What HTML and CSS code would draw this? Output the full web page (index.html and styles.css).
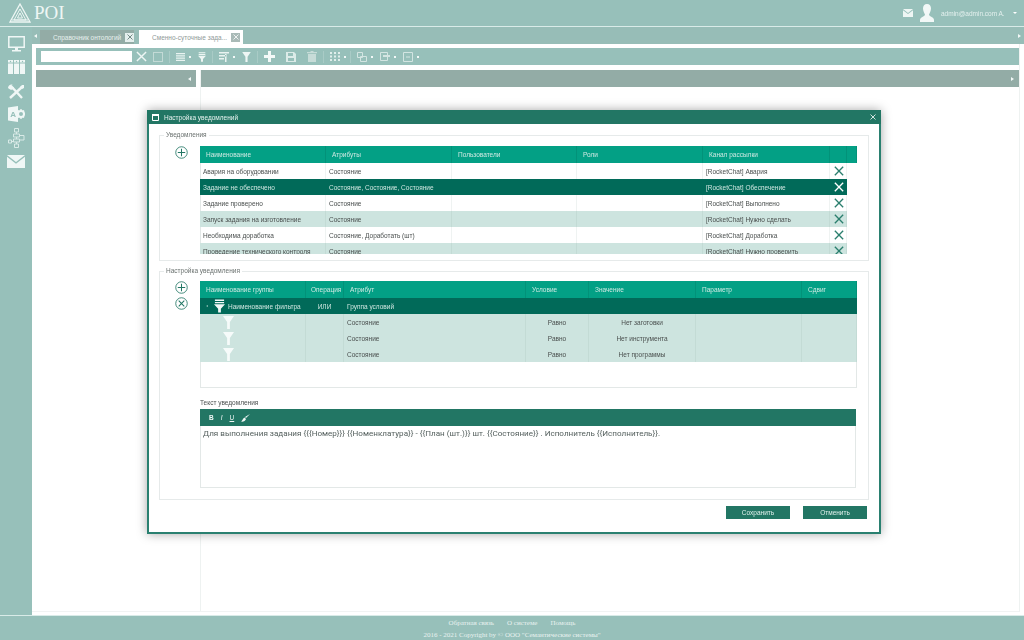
FILE: index.html
```html
<!DOCTYPE html>
<html lang="en">
<head>
<meta charset="UTF-8">
<title>POI</title>
<link rel="stylesheet" href="styles.css">
</head>
<body>
<svg class="defs" width="0" height="0">
  <symbol id="x" viewBox="0 0 12 12"><path d="M1 1l10 10M11 1L1 11" fill="none" stroke="currentColor" stroke-width="1.6"/></symbol>
  <symbol id="funnel" viewBox="0 0 12 14"><path d="M0 0h12L7.500 6.500V14h-3V6.500z" fill="currentColor"/></symbol>
  <symbol id="funnel-head" viewBox="0 0 12 14"><path d="M1 0h10v1.500H1zM1 2.500h10V4H1zM0 5h12L7.500 10v4h-3v-4z" fill="currentColor"/></symbol>
  <symbol id="plus-round" viewBox="0 0 14 14"><circle cx="7" cy="7" r="6.200" fill="none" stroke="currentColor" stroke-width=".9"/><path d="M7 3v8M3 7h8" stroke="currentColor" stroke-width="1.100"/></symbol>
  <symbol id="x-round" viewBox="0 0 14 14"><circle cx="7" cy="7" r="6.200" fill="none" stroke="currentColor" stroke-width=".9"/><path d="M4 4l6 6M10 4l-6 6" stroke="currentColor" stroke-width="1.100"/></symbol>
</svg>

<header class="topbar">
  <div class="logo">
    <svg width="22" height="20" viewBox="0 0 22 20"><path d="M11 1l10 18H1z" fill="none" stroke="#eef6f4" stroke-width="1.300"/><path d="M11 6l6 11H5z" fill="none" stroke="#eef6f4"/><path d="M11 10l2.500 5h-5zM3 17h16" fill="none" stroke="#eef6f4"/></svg>
    <span class="logo-name">POI</span>
  </div>
  <div class="user">
    <svg width="10" height="8" viewBox="0 0 10 8"><path d="M0 0h10L5 4z M0 1.200V8h10V1.200L5 5z" fill="#eef6f4"/></svg>
    <svg width="14" height="18" viewBox="0 0 14 18"><path d="M7 0c2.600 0 4 2 4 4.500S9.500 9.500 9 10.500c0 1 1.500 2 3 2.700 1.300.6 2 1.500 2 2.800v2H0v-2c0-1.300.7-2.200 2-2.800 1.500-.7 3-1.700 3-2.700-.5-1-2-3.500-2-6S4.400 0 7 0z" fill="#f2f8f7"/></svg>
    <span class="user-name">admin@admin.com A.</span>
    <span class="caret"></span>
  </div>
</header>

<div class="middle">
  <nav class="sidebar">
    <svg width="17" height="16" viewBox="0 0 17 16"><path d="M.8.800h15.400v10.400H.8z" fill="none" stroke="#f0f7f6" stroke-width="1.500"/><path d="M7 11.500h3V14H7zM4 14h9v1.500H4z" fill="#f0f7f6"/></svg>
    <svg class="nav-binders" width="17" height="14" viewBox="0 0 17 14"><path d="M0 0h5v14H0zM6 0h5v14H6zM12 0h5v14h-5z" fill="#f0f7f6"/><path d="M0 3h17" stroke="#97c0ba"/><circle cx="2.500" cy="1.500" r=".7" fill="#97c0ba"/><circle cx="8.500" cy="1.500" r=".7" fill="#97c0ba"/><circle cx="14.500" cy="1.500" r=".7" fill="#97c0ba"/></svg>
    <svg class="nav-tools" width="16" height="16" viewBox="0 0 16 16"><path d="M2 14L14 3" stroke="#f0f7f6" stroke-width="2.400"/><path d="M3 2l11 12" stroke="#f0f7f6" stroke-width="2.400"/><path d="M0 4c0-2 2-4 4.500-3.500L3 2.500 4 4l2-1C6 6 3 7 0 4zM16 1v3l-2 1-2-2 2-2z" fill="#f0f7f6"/></svg>
    <svg class="nav-tight" width="17" height="16" viewBox="0 0 17 16"><path d="M0 1.500l10-1.500v16L0 14.500z" fill="#f0f7f6"/><circle cx="13" cy="8" r="3" fill="none" stroke="#f0f7f6" stroke-width="2"/><path d="M13 3v2M13 11v2M8.500 8h2M15.500 8H17M10 4.500l1.200 1.200M16 4.500l-1.200 1.200M10 11.500l1.200-1.200M16 11.500l-1.200-1.200" stroke="#f0f7f6" stroke-width="1.400"/><text x="2.200" y="11" class="icon-letter">A</text></svg>
    <svg class="nav-tight" width="17" height="20" viewBox="0 0 17 20" fill="none" stroke="#d9eae7"><path d="M6.500.500h4v3.500h-4zM5.500 6h6v3h-6zM5.500 11h6v3h-6zM6.500 16h4v3.500h-4zM.5 12h3v3h-3zM8.500 4v2M8.500 9v2M8.500 14v2M11.500 7.500H16V12h-4.500M3.500 13.500h2"/></svg>
    <svg width="18" height="13" viewBox="0 0 18 13"><path d="M0 0h18L9 7z M0 1.800V13h18V1.800L9 8.800z" fill="#f0f7f6"/></svg>
  </nav>

  <main class="content">
    <div class="tabbar">
      <span class="arrow-left"></span>
      <div class="tab">
        <span class="tab-title">Справочник онтологий</span>
        <span class="tab-close"><svg width="6" height="6"><use href="#x"/></svg></span>
      </div>
      <div class="tab tab-active">
        <span class="tab-title">Сменно-суточные зада...</span>
        <span class="tab-close"><svg width="6" height="6"><use href="#x"/></svg></span>
      </div>
      <span class="arrow-right"></span>
    </div>

    <div class="workspace">
      <div class="toolbar">
        <div class="search"></div>
        <svg class="tool-x" width="11" height="11"><use href="#x"/></svg>
        <span class="tool-square"></span>
        <span class="sep"></span>
        <svg width="9" height="8" viewBox="0 0 9 8"><path d="M0 0h9v1.200H0zM0 2.300h9v1.200H0zM0 4.600h9v1.200H0zM0 6.800h9V8H0z" fill="#e9f3f1"/></svg>
        <span class="dot"></span>
        <svg width="8" height="10"><use href="#funnel-head"/></svg>
        <span class="sep"></span>
        <svg width="10" height="10" viewBox="0 0 10 10"><path d="M0 0h10v1.500H0zM0 3h7v1.500H0zM0 6h5v1.500H0zM6 2v8h1.500V2z" fill="#e9f3f1"/></svg>
        <span class="dot"></span>
        <svg width="9" height="10"><use href="#funnel"/></svg>
        <span class="sep"></span>
        <svg width="11" height="11" viewBox="0 0 11 11"><path d="M4 0h3v4h4v3H7v4H4V7H0V4h4z" fill="#f4f9f8"/></svg>
        <svg class="gap" width="10" height="10" viewBox="0 0 10 10"><path d="M0 0h8l2 2v8H0zM2 1v3h5V1zM2 6v3h6V6z" fill="#dcebe8" fill-rule="evenodd"/></svg>
        <svg class="gap" width="10" height="11" viewBox="0 0 10 11"><path d="M0 1h10v1.300H0zM3.500 0h3v1h-3zM1 3h8v8H1z" fill="#c7dcd8"/></svg>
        <span class="sep"></span>
        <svg width="10" height="9" viewBox="0 0 10 9"><path d="M0 0h2v2H0zM4 0h2v2H4zM8 0h2v2H8zM0 3.500h2v2H0zM4 3.500h2v2H4zM8 3.500h2v2H8zM0 7h2v2H0zM4 7h2v2H4zM8 7h2v2H8z" fill="#e0eeeb"/></svg>
        <span class="dot"></span>
        <span class="sep"></span>
        <svg width="10" height="10" viewBox="0 0 10 10" fill="none" stroke="#d3e5e2"><path d="M.5.500h5v5h-5zM3.500 4.500h6v5h-6z"/></svg>
        <span class="dot"></span>
        <svg width="10" height="9" viewBox="0 0 10 9" fill="none" stroke="#d3e5e2"><path d="M.5.500h7v8h-7z"/><path d="M3 4h7" stroke-width="2"/></svg>
        <span class="dot"></span>
        <svg width="10" height="10" viewBox="0 0 10 10" fill="none" stroke="#d3e5e2"><path d="M.5.500h9v9h-9zM3 5h4"/></svg>
        <span class="dot"></span>
      </div>

      <div class="panels">
        <div class="panel panel-left"><div class="panel-head"><span class="arrow-left"></span></div></div>
        <div class="panel panel-right"><div class="panel-head"><span class="arrow-right"></span></div></div>
      </div>
    </div>
  </main>
</div>

<footer class="footer">
  <div class="footer-links"><span>Обратная связь</span><span>О системе</span><span>Помощь</span></div>
  <div>2016 - 2021 Copyright by © ООО "Семантические системы"</div>
</footer>

<section class="dialog">
  <div class="dialog-head">
    <svg width="7" height="7" viewBox="0 0 7 7"><path d="M.5.500h6v6h-6z" fill="#227664" stroke="#fff"/><path d="M0 0h7v2H0z" fill="#fff"/></svg>
    <span class="dialog-title">Настройка уведомлений</span>
    <svg class="dialog-close" width="6" height="6"><use href="#x"/></svg>
  </div>
  <div class="dialog-body">
    <fieldset class="group group-list">
      <legend>Уведомления</legend>
      <div class="tools">
        <svg width="13" height="13"><use href="#plus-round"/></svg>
      </div>
      <div class="grid-wrap grid-wrap-list">
        <table class="grid">
          <colgroup><col style="width:126px"><col style="width:126px"><col style="width:125px"><col style="width:126px"><col style="width:127px"><col style="width:17px"><col style="width:10px"></colgroup>
          <thead><tr><th>Наименование</th><th>Атрибуты</th><th>Пользователи</th><th>Роли</th><th>Канал рассылки</th><th></th><th></th></tr></thead>
          <tbody>
            <tr><td>Авария на оборудовании</td><td>Состояние</td><td></td><td></td><td>[RocketChat] Авария</td><td class="del"><svg width="10" height="10"><use href="#x"/></svg></td><td class="gutter"></td></tr>
            <tr class="selected"><td>Задание не обеспечено</td><td>Состояние, Состояние, Состояние</td><td></td><td></td><td>[RocketChat] Обеспечение</td><td class="del"><svg width="10" height="10"><use href="#x"/></svg></td><td class="gutter"></td></tr>
            <tr><td>Задание проверено</td><td>Состояние</td><td></td><td></td><td>[RocketChat] Выполнено</td><td class="del"><svg width="10" height="10"><use href="#x"/></svg></td><td class="gutter"></td></tr>
            <tr class="alt"><td>Запуск задания на изготовление</td><td>Состояние</td><td></td><td></td><td>[RocketChat] Нужно сделать</td><td class="del"><svg width="10" height="10"><use href="#x"/></svg></td><td class="gutter"></td></tr>
            <tr><td>Необходима доработка</td><td>Состояние, Доработать (шт)</td><td></td><td></td><td>[RocketChat] Доработка</td><td class="del"><svg width="10" height="10"><use href="#x"/></svg></td><td class="gutter"></td></tr>
            <tr class="alt"><td>Проведение технического контроля</td><td>Состояние</td><td></td><td></td><td>[RocketChat] Нужно проверить</td><td class="del"><svg width="10" height="10"><use href="#x"/></svg></td><td class="gutter"></td></tr>
          </tbody>
        </table>
      </div>
    </fieldset>

    <fieldset class="group group-setup">
      <legend>Настройка уведомления</legend>
      <div class="tools">
        <svg width="13" height="13"><use href="#plus-round"/></svg>
        <svg width="13" height="13"><use href="#x-round"/></svg>
      </div>
      <div class="setup-main">
        <div class="grid-wrap grid-wrap-filter">
          <table class="grid">
            <colgroup><col style="width:106px"><col style="width:38px"><col style="width:182px"><col style="width:63px"><col style="width:107px"><col style="width:106px"><col style="width:55px"></colgroup>
            <thead><tr><th>Наименование группы</th><th class="th-tight">Операция</th><th>Атрибут</th><th>Условие</th><th>Значение</th><th>Параметр</th><th>Сдвиг</th></tr></thead>
            <tbody>
              <tr class="selected"><td><div class="tree-cell"><span class="tree-caret"></span><svg width="11" height="14"><use href="#funnel-head"/></svg><span>Наименование фильтра</span></div></td><td class="center">ИЛИ</td><td>Группа условий</td><td></td><td></td><td></td><td></td></tr>
              <tr class="alt"><td class="leaf-cell"><svg width="11" height="13"><use href="#funnel"/></svg></td><td></td><td>Состояние</td><td class="center">Равно</td><td class="center">Нет заготовки</td><td></td><td></td></tr>
              <tr class="alt"><td class="leaf-cell"><svg width="11" height="13"><use href="#funnel"/></svg></td><td></td><td>Состояние</td><td class="center">Равно</td><td class="center">Нет инструмента</td><td></td><td></td></tr>
              <tr class="alt"><td class="leaf-cell"><svg width="11" height="13"><use href="#funnel"/></svg></td><td></td><td>Состояние</td><td class="center">Равно</td><td class="center">Нет программы</td><td></td><td></td></tr>
            </tbody>
          </table>
        </div>
        <div class="editor-label">Текст уведомления</div>
        <div class="editor">
          <div class="editor-bar">
            <b>B</b><i>I</i><u>U</u>
            <svg width="9" height="8" viewBox="0 0 9 8"><path d="M9 0L5 4 4 3zM3.500 3.500l1.500 1.500C4.500 7 2 8 0 7.500c1.500-.5 1.500-3 3.500-4z" fill="#f2f8f7"/></svg>
          </div>
          <div class="editor-text">Для выполнения задания {{{Номер}}} {{Номенклатура}} - {{План (шт.)}} шт. {{Состояние}} . Исполнитель {{Исполнитель}}.</div>
        </div>
      </div>
    </fieldset>

    <div class="dialog-actions">
      <button class="btn">Сохранить</button>
      <button class="btn">Отменить</button>
    </div>
  </div>
</section>
</body>
</html>
```

FILE: styles.css
```css
* {
  box-sizing: border-box;
}
html, body {
  margin: 0;
  padding: 0;
  height: 640px;
  overflow: hidden;
}
body {
  position: relative;
  display: flex;
  flex-direction: column;
  font-family: 'Liberation Sans', Arial, sans-serif;
  font-size: 6.500px;
  color: #4a4f4e;
  background-color: #97c0ba;
  filter: blur(0.35px);
}
.defs {
  position: absolute;
}
.topbar {
  height: 27px;
  flex: none;
  display: flex;
  justify-content: space-between;
  align-items: center;
  padding: 0 7px 0 9px;
  background-color: #97c0ba;
  border-bottom: 1px solid #d9ebe8;
}
.logo {
  display: flex;
  align-items: center;
  gap: 3px;
}
.logo-name {
  font-family: 'Liberation Serif', serif;
  font-size: 19px;
  color: #eef6f4;
}
.user {
  display: flex;
  align-items: center;
  gap: 7px;
  color: #e4f0ee;
}
.user-name {
  width: 65px;
  white-space: nowrap;
}
.caret {
  width: 0;
  height: 0;
  border-left: 2px solid transparent;
  border-right: 2px solid transparent;
  border-top: 2px solid #fff;
}
.middle {
  flex: 1;
  display: flex;
  min-height: 0;
}
.sidebar {
  width: 32px;
  flex: none;
  display: flex;
  flex-direction: column;
  align-items: center;
  gap: 7px;
  padding-top: 9px;
  background-color: #97c0ba;
}
.nav-binders {
  margin-top: 1px;
}
.nav-tools {
  margin-top: 3px;
}
.nav-tight {
  margin-top: -1px;
}
.icon-letter {
  font-size: 8px;
  font-weight: bold;
  fill: #97c0ba;
}
.content {
  flex: 1;
  display: flex;
  flex-direction: column;
  background-color: #fff;
}
.tabbar {
  height: 17px;
  flex: none;
  display: flex;
  align-items: flex-end;
  gap: 5px;
  background-color: #97bdb7;
  padding-left: 8px;
  position: relative;
}
.tabbar .arrow-left {
  position: absolute;
  left: 2px;
  top: 7px;
}
.tabbar .arrow-right {
  position: absolute;
  right: 3px;
  top: 7px;
}
.arrow-left, .arrow-right {
  display: block;
  width: 0;
  height: 0;
  border-top: 2px solid transparent;
  border-bottom: 2px solid transparent;
}
.arrow-left {
  border-right: 3px solid #f2f8f7;
}
.arrow-right {
  border-left: 3px solid #f2f8f7;
}
.tab {
  width: 94px;
  height: 14px;
  display: flex;
  align-items: center;
  justify-content: space-between;
  padding: 0 0 0 13px;
  background-color: #93aca6;
  color: #e6f0ee;
  white-space: nowrap;
}
.tab-active {
  width: 104px;
  background-color: #fff;
  color: #8f9a98;
  padding-right: 3px;
}
.tab-close {
  width: 9px;
  height: 9px;
  display: flex;
  align-items: center;
  justify-content: center;
  background-color: #e4efed;
  color: #56706b;
}
.tab-active .tab-close {
  background-color: #a9bab7;
  color: #fff;
}
.workspace {
  flex: 1;
  display: flex;
  flex-direction: column;
  padding: 4px 0 0 4px;
  min-height: 0;
  border-right: 1px solid #eef2f1;
  border-bottom: 1px solid #f1f3f3;
  margin: 0 4px 3px 0;
}
.toolbar {
  height: 17px;
  flex: none;
  display: flex;
  align-items: center;
  gap: 4px;
  padding-left: 5px;
  background-color: #97c0ba;
  color: #eef6f4;
}
.search {
  width: 91px;
  height: 11px;
  background-color: #fff;
}
.tool-x {
  margin-right: 2px;
}
.tool-square {
  width: 10px;
  height: 10px;
  border: 1px solid #c3dad6;
}
.sep {
  width: 1px;
  height: 12px;
  margin: 0 2px;
  background-color: #a9cbc6;
}
.dot {
  width: 2px;
  height: 2px;
  margin-right: 3px;
  background-color: #f2f8f7;
}
.dot + .sep {
  margin-left: -3px;
}
.gap {
  margin-left: 7px;
}
.panels {
  flex: 1;
  display: flex;
  gap: 4px;
  padding-top: 5px;
  min-height: 0;
}
.panel-left {
  width: 160px;
}
.panel-right {
  flex: 1;
  border-left: 1px solid #eef2f1;
}
.panel-head {
  height: 17px;
  display: flex;
  align-items: center;
  justify-content: flex-end;
  padding-right: 5px;
  background-color: #93aca6;
}
.footer {
  height: 25px;
  flex: none;
  text-align: center;
  font-family: 'Liberation Serif', serif;
  font-size: 7px;
  line-height: 12px;
  padding-top: 1px;
  color: #e8f2f0;
  background-color: #97c0ba;
  border-top: 1px solid #d9ebe8;
}
.footer-links {
  display: flex;
  justify-content: center;
  gap: 13px;
}

/* dialog */
.dialog {
  position: absolute;
  left: 147px;
  top: 110px;
  width: 734px;
  height: 424px;
  display: flex;
  flex-direction: column;
  background-color: #fff;
  border: 2px solid #2a8070;
  border-top: 0;
  box-shadow: 0 0 10px rgba(0, 0, 0, 0.35);
}
.dialog-head {
  height: 14px;
  flex: none;
  margin: 0 -2px;
  display: flex;
  align-items: center;
  gap: 5px;
  padding: 0 5px;
  background-color: #227664;
  color: #e6f2ef;
}
.dialog-title {
  flex: 1;
}
.dialog-close {
  color: #fff;
}
.dialog-body {
  flex: 1;
  padding: 7px 10px 0 10px;
  display: flex;
  flex-direction: column;
}
.group {
  margin: 0;
  padding: 0 11px 0 0;
  min-width: 0;
  display: flex;
  border: 1px solid #e6eaea;
}
.group legend {
  margin-left: 4px;
  padding: 0 2px;
  line-height: 8px;
  color: #6b7270;
}
.group-list {
  height: 130px;
}
.group-setup {
  height: 233px;
  margin-top: 6px;
}
.tools {
  width: 40px;
  flex: none;
  display: flex;
  flex-direction: column;
  align-items: center;
  gap: 3px;
  padding-left: 2px;
  padding-top: 6px;
  color: #227664;
}
.group-list .tools {
  padding-top: 7px;
}
.grid-wrap {
  width: 657px;
  overflow: hidden;
  box-shadow: inset 0 0 0 1px #e3e8e7;
  margin-top: 6px;
}
.grid-wrap-list {
  height: 108px;
  margin-top: 7px;
}
.grid-wrap-filter {
  height: 107px;
}
.setup-main {
  width: 657px;
}
.grid {
  width: 657px;
  table-layout: fixed;
  border-collapse: separate;
  border-spacing: 0;
}
.grid th, .grid td {
  height: 16px;
  padding: 0 3px;
  overflow: hidden;
  white-space: nowrap;
  text-align: left;
  font-weight: normal;
  border-right: 1px solid rgba(120, 160, 150, 0.12);
}
.grid th {
  height: 17px;
  padding-left: 6px;
  color: #cfe9e3;
  background-color: #03a085;
  border-right: 1px solid rgba(0, 90, 75, 0.2);
}
.grid .th-tight {
  padding-left: 5px;
  padding-right: 0;
}
.grid tr.alt td {
  background-color: #cde4df;
}
.grid tr.selected td {
  color: #cfe6e0;
  background-color: #016a59;
  border-right-color: transparent;
}
.grid td.del {
  padding: 0 0 0 4px;
  color: #2b7f6e;
}
.grid td.del svg {
  display: block;
}
.grid tr.selected td.del {
  color: #fff;
}
.grid td.gutter, .grid tr.alt td.gutter, .grid tr.selected td.gutter {
  background-color: #fff;
  border: 0;
}
.grid td.center {
  text-align: center;
}
.tree-cell {
  display: flex;
  align-items: center;
  padding-left: 3px;
}
.tree-cell svg {
  margin: 0 3px 0 6px;
  color: #f2f8f7;
}
.tree-caret {
  width: 0;
  height: 0;
  border-top: 1.500px solid transparent;
  border-bottom: 1.500px solid transparent;
  border-right: 2px solid #8fbfb6;
}
.grid .leaf-cell {
  padding: 1px 0 0 23px;
  color: #f6fbfa;
}
.leaf-cell svg {
  display: block;
}
.editor-label {
  margin-top: 11px;
  line-height: 8px;
}
.editor {
  width: 656px;
  height: 79px;
  margin-top: 2px;
  border: 1px solid #e3e8e7;
  border-top: 0;
}
.editor-bar {
  height: 17px;
  margin: 0 -1px;
  display: flex;
  align-items: center;
  gap: 7px;
  padding-left: 9px;
  background-color: #227664;
  color: #f2f8f7;
}
.editor-text {
  padding: 1px 2px;
  font-family: Roboto, sans-serif;
  font-size: 8.100px;
  line-height: 12px;
  white-space: nowrap;
  color: #55605e;
}
.dialog-actions {
  display: flex;
  justify-content: flex-end;
  gap: 13px;
  padding: 6px 2px 0 0;
}
.btn {
  width: 64px;
  height: 13px;
  padding: 0;
  border: 0;
  font-family: 'Liberation Sans', Arial, sans-serif;
  font-size: 6.500px;
  color: #dff0ec;
  background-color: #227664;
}
```
